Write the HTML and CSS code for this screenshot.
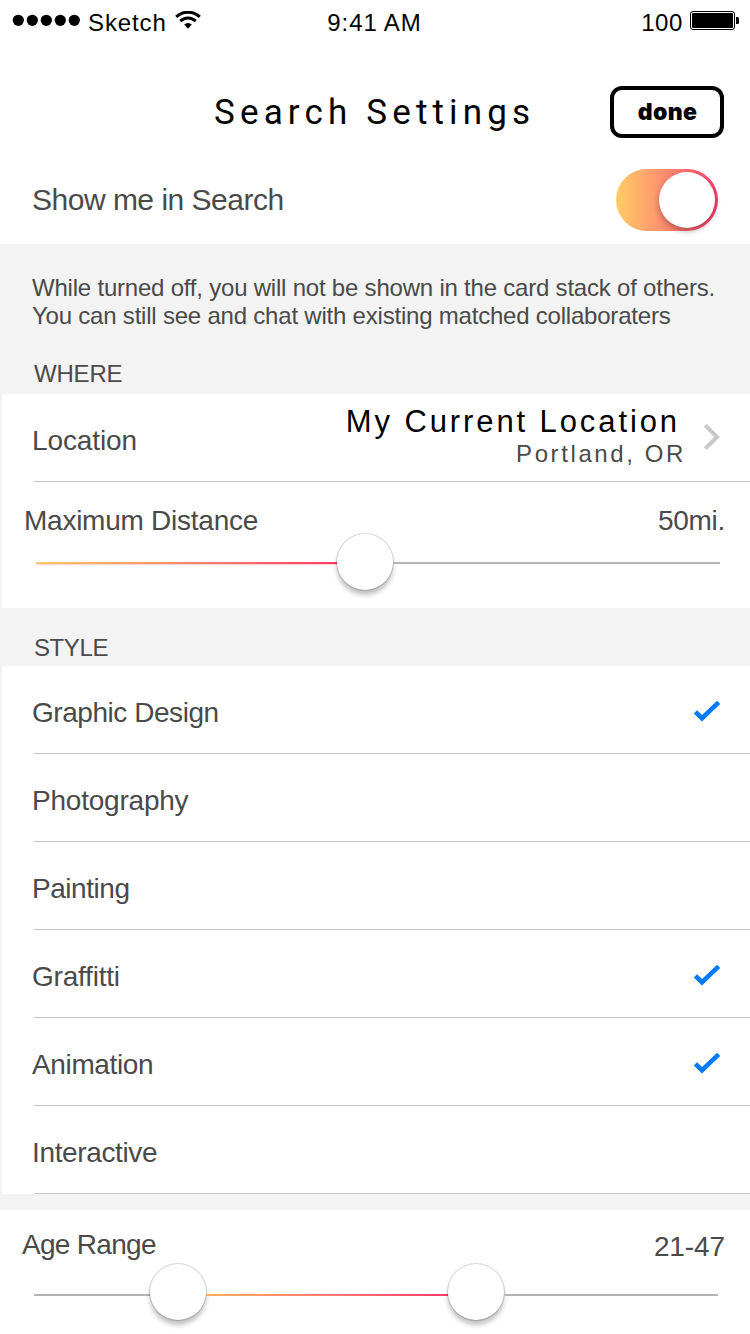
FILE: index.html
```html
<!DOCTYPE html>
<html lang="en">
<head>
<meta charset="utf-8">
<title>Search Settings</title>
<link rel="stylesheet" href="styles.css">
</head>
<body>
<div class="status">
  <div class="carrier">
    <svg class="dots" width="70" height="12" viewBox="0 0 70 12"><circle cx="6.3" cy="6.3" r="5.6"/><circle cx="20.3" cy="6.3" r="5.6"/><circle cx="34.3" cy="6.3" r="5.6"/><circle cx="48.3" cy="6.3" r="5.6"/><circle cx="62.3" cy="6.3" r="5.6"/></svg>
    <span class="carrier-name">Sketch</span>
    <svg class="wifi" width="26" height="18" viewBox="0 0 26 18"><g fill="none" stroke="#000" stroke-width="2.9"><path d="M1.2 5.9A17.2 17.2 0 0 1 24.8 5.9"/><path d="M5.3 10.1A11 11 0 0 1 20.7 10.1"/></g><path d="M9.2 13.6A5.4 5.4 0 0 1 16.8 13.6L13 17.8Z"/></svg>
  </div>
  <div class="time">9:41 AM</div>
  <div class="power">
    <span class="level">100</span>
    <svg class="battery" width="50" height="20" viewBox="0 0 50 20"><rect x=".5" y=".5" width="44" height="18" rx="2.5" fill="none" stroke="#000"/><rect x="2" y="2" width="41" height="15" rx="1"/><path d="M46 6h1.5a1.5 1.5 0 0 1 1.5 1.5v4a1.5 1.5 0 0 1-1.5 1.5H46Z"/></svg>
  </div>
</div>
<header class="header">
  <h1 class="title">Search Settings</h1>
  <button class="done">done</button>
</header>
<div class="show-row">
  <span class="show-label">Show me in Search</span>
  <div class="toggle"><div class="toggle-knob"></div></div>
</div>
<div class="note">
  <p class="note-text">While turned off, you will not be shown in the card stack of others.<br>You can still see and chat with existing matched collaboraters</p>
  <h2 class="section where">WHERE</h2>
</div>
<div class="card">
  <div class="location">
    <span class="label">Location</span>
    <div class="place">
      <span class="current">My Current Location</span>
      <span class="city">Portland, OR</span>
    </div>
    <svg class="chevron" width="18" height="28" viewBox="0 0 18 28"><path d="M2.3 2.3 14 14 2.3 25.7" fill="none" stroke="#c7c7cc" stroke-width="4"/></svg>
  </div>
  <div class="distance">
    <div class="slider-head"><span class="distance-label">Maximum Distance</span><span class="miles">50mi.</span></div>
    <div class="slider"><div class="fill fill-distance"></div><div class="thumb"></div><div class="track"></div></div>
  </div>
</div>
<h2 class="section style-title">STYLE</h2>
<div class="card">
  <div class="option"><span class="label">Graphic Design</span><svg class="check" width="28" height="22" viewBox="0 0 28 22"><path d="M2.4 11.8 9 18.2 25.6 2.4" fill="none" stroke="#007aff" stroke-width="4.6"/></svg></div>
  <div class="option"><span class="label loose">Photography</span></div>
  <div class="option"><span class="label">Painting</span></div>
  <div class="option"><span class="label loose">Graffitti</span><svg class="check" width="28" height="22" viewBox="0 0 28 22"><path d="M2.4 11.8 9 18.2 25.6 2.4" fill="none" stroke="#007aff" stroke-width="4.6"/></svg></div>
  <div class="option"><span class="label snug">Animation</span><svg class="check" width="28" height="22" viewBox="0 0 28 22"><path d="M2.4 11.8 9 18.2 25.6 2.4" fill="none" stroke="#007aff" stroke-width="4.6"/></svg></div>
  <div class="option"><span class="label snug">Interactive</span></div>
</div>
<div class="age">
  <div class="slider-head"><span class="age-label">Age Range</span><span class="years">21-47</span></div>
  <div class="slider"><div class="track track-start"></div><div class="thumb"></div><div class="fill fill-age"></div><div class="thumb"></div><div class="track"></div></div>
</div>
</body>
</html>
```
FILE: styles.css
```css
* { box-sizing: border-box; margin: 0; padding: 0; }
body {
  width: 750px;
  height: 1334px;
  overflow: hidden;
  background: #f3f3f3;
  color: #4a4a4a;
  font-family: "Liberation Sans", Arial, sans-serif;
  font-size: 28px;
  font-variant-ligatures: none;
  white-space: nowrap;
}
svg { display: block; flex: none; }
.status {
  display: grid;
  grid-template-columns: 250px 1fr 250px;
  height: 46px;
  background: #fff;
  color: #000;
  font-size: 24px;
  letter-spacing: 0.9px;
  line-height: 46px;
}
.carrier { display: flex; padding-left: 12px; }
.dots { margin-top: 14px; }
.carrier-name { width: 81px; margin-left: 6px; }
.wifi { margin: 11px 0 0 6px; }
.time { padding-right: 1px; text-align: center; letter-spacing: 0.9px; }
.power { display: flex; justify-content: flex-end; padding-right: 10px; }
.level { letter-spacing: 0.6px; }
.battery { margin: 11px 0 0 7px; }
.header {
  display: flex;
  justify-content: flex-end;
  height: 111px;
  padding: 40px 26px 0 0;
  background: #fff;
  color: #000;
}
.title {
  width: 322px;
  margin-right: 74px;
  font: 400 35px/53px Roboto, sans-serif;
  letter-spacing: 5.15px;
}
.done {
  width: 114px;
  height: 52px;
  border: 4px solid #000;
  border-radius: 12px;
  background: #fff;
  color: #000;
  font: 900 23px/42px Inter, sans-serif;
  letter-spacing: 0.3px;
  padding-left: 1px;
}
.show-row {
  display: flex;
  justify-content: space-between;
  height: 87px;
  padding: 12px 32px 0;
  background: #fff;
}
.show-label { font-size: 30px; line-height: 62px; letter-spacing: -0.5px; }
.toggle {
  display: flex;
  width: 102px;
  height: 62px;
  padding: 3px 3px 3px 43px;
  border-radius: 31px;
  background: linear-gradient(90deg, #ffcc66, #ff8a70 50%, #ff3b6e);
}
.toggle-knob {
  width: 56px;
  height: 56px;
  border-radius: 50%;
  background: #fff;
  box-shadow: 0 3px 6px rgba(0, 0, 0, 0.3);
}
.note { height: 150px; padding: 30px 0 0 32px; }
.note-text { font-size: 24px; line-height: 28px; letter-spacing: -0.21px; }
.section { padding-left: 34px; font-size: 24px; font-weight: 400; }
.where { margin-top: 29px; padding-left: 2px; line-height: 30px; letter-spacing: -0.2px; }
.card { margin-left: 2px; background: #fff; }
.label { letter-spacing: -0.45px; }
.loose { letter-spacing: -0.22px; }
.snug { letter-spacing: -0.36px; }
.location {
  display: flex;
  align-items: flex-start;
  height: 88px;
  margin-left: 32px;
  padding-right: 29px;
  border-bottom: 1px solid #c8c7cc;
}
.location .label { margin-left: -2px; line-height: 93px; letter-spacing: -0.1px; }
.place { display: flex; flex-direction: column; align-items: flex-end; margin-left: auto; }
.current { margin-top: 12px; color: #000; font-size: 31px; line-height: 32px; letter-spacing: 2.9px; margin-right: 6px; }
.city { margin-top: 1px; font-size: 24px; line-height: 30px; letter-spacing: 2.6px; }
.chevron { margin: 29px 0 0 17px; }
.distance { height: 126px; padding: 23px 30px 0 34px; }
.slider-head { display: flex; justify-content: space-between; line-height: 32px; }
.distance-label { margin-left: -12px; letter-spacing: -0.25px; }
.miles { margin-right: -5px; letter-spacing: -0.3px; }
.slider { display: flex; align-items: center; height: 57px; }
.distance .slider { margin-top: -4px; }
.track { flex: 1; height: 2px; margin-top: 3px; background: #b5b5b5; }
.fill-distance {
  width: 301px;
  height: 2px;
  margin-top: 3px;
  background: linear-gradient(90deg, #ffc861, #ff8a70 50%, #ff3b6b);
  box-shadow: 0 1px 0 rgba(255, 138, 112, 0.35);
}
.fill-age { width: 242px; height: 2px; background: linear-gradient(90deg, #ffb05f, #ff7a70 50%, #ff3b6b); }
.thumb {
  flex: none;
  width: 56px;
  height: 56px;
  border-radius: 50%;
  background: #fff;
  box-shadow: 0 0 0 1px rgba(0, 0, 0, 0.15), 0 5px 5px rgba(0, 0, 0, 0.25);
}
.style-title { height: 58px; line-height: 79px; letter-spacing: -0.4px; }
.option {
  display: flex;
  justify-content: space-between;
  height: 88px;
  margin-left: 32px;
  padding-right: 29px;
  border-bottom: 1px solid #c8c7cc;
  line-height: 93px;
}
.option .label { margin-left: -2px; }
.check { margin-top: 34px; }
.age { height: 124px; margin-top: 16px; padding: 19px 32px 0 34px; background: #fff; }
.age-label { margin-left: -12px; letter-spacing: -0.7px; }
.years { margin: 2px -7px 0 0; letter-spacing: -0.1px; }
.age .slider { margin-top: 0; }
.age .track, .age .fill { margin-top: 7px; }
.track-start { flex: none; width: 116px; }
```
